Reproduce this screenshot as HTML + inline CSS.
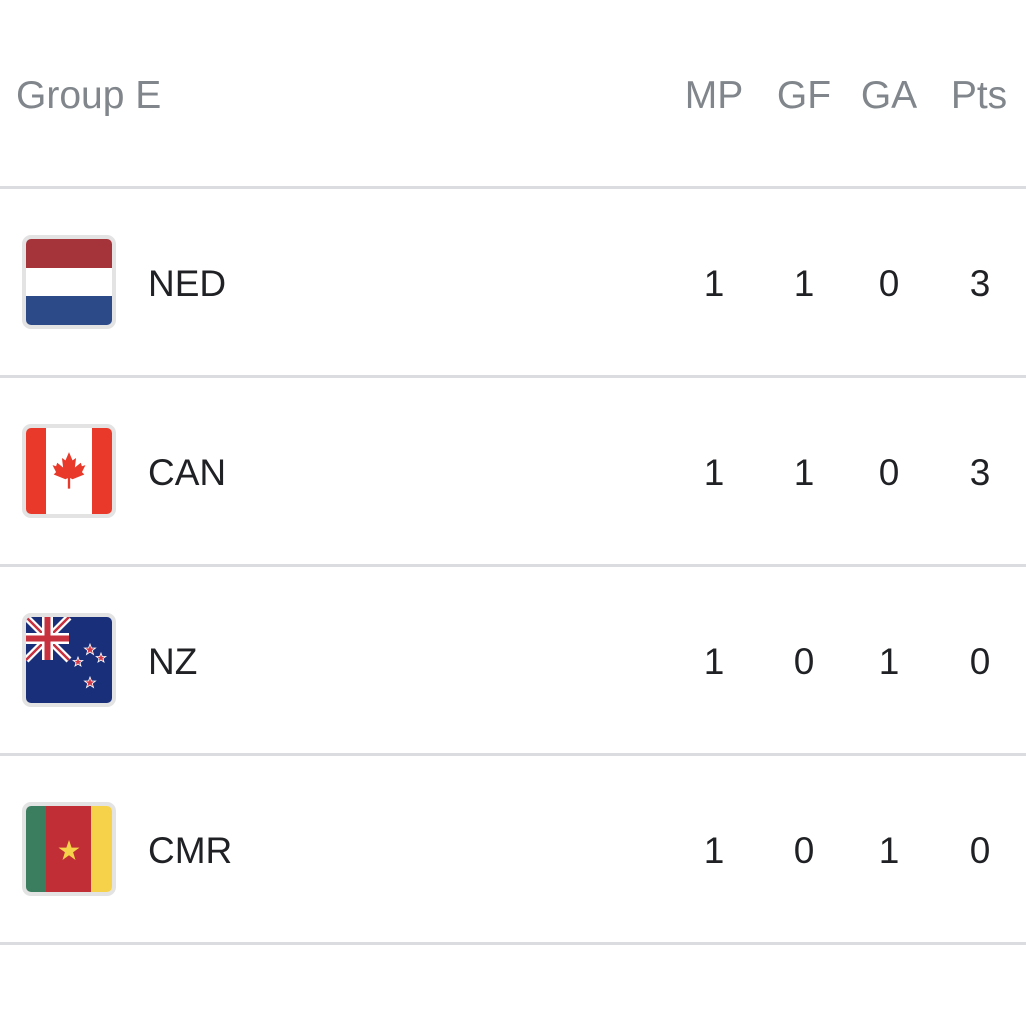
<!DOCTYPE html>
<html><head><meta charset="utf-8"><style>
html,body{margin:0;padding:0;background:#fff;width:1026px;height:1017px;overflow:hidden;font-family:"Liberation Sans",Arial,sans-serif}
.t{position:absolute;white-space:nowrap;font-size:37px;line-height:1}
.h{color:#80868b;top:76px;font-size:39px}
.c{transform:translateX(-50%)}
.n{color:#202124}
.line{position:absolute;left:0;width:1026px;height:3px;background:#dadce0}
.flag{position:absolute;left:22px;width:86px;height:86px;border:4px solid #e3e3e3;border-radius:9px;overflow:hidden}
.flag>div{position:absolute}
</style></head><body>
<div class="t h" style="left:16px">Group E</div>
<div class="t h c" style="left:714px">MP</div>
<div class="t h c" style="left:804px">GF</div>
<div class="t h c" style="left:889px">GA</div>
<div class="t h c" style="left:979px">Pts</div>

<div class="line" style="top:186px"></div>
<div class="line" style="top:375px"></div>
<div class="line" style="top:564px"></div>
<div class="line" style="top:753px"></div>
<div class="line" style="top:942px"></div>

<!-- NED -->
<div class="flag" style="top:235px">
<div style="left:0;top:0;width:86px;height:29px;background:#a4333a"></div>
<div style="left:0;top:29px;width:86px;height:28px;background:#fff"></div>
<div style="left:0;top:57px;width:86px;height:29px;background:#2c4a88"></div>
</div>
<!-- CAN -->
<div class="flag" style="top:424px">
<div style="left:0;top:0;width:20px;height:86px;background:#e8392a"></div>
<div style="left:20px;top:0;width:46px;height:86px;background:#fff"></div>
<div style="left:66px;top:0;width:20px;height:86px;background:#e8392a"></div>
<svg style="position:absolute;left:25px;top:23px" width="36" height="40" viewBox="0 0 30 34"><path d="M15 1 L18 8 L21 6 L20 14 L25 10 L26 13 L29 12 L26 18 L28 20 L18 24 L16 23 L16 32 L14 32 L14 23 L12 24 L2 20 L4 18 L1 12 L4 13 L5 10 L10 14 L9 6 L12 8 Z" fill="#e8392a"/></svg>
</div>
<!-- NZ -->
<div class="flag" style="top:613px;background:#1a2f7a">
<svg style="position:absolute;left:0;top:0" width="86" height="86" viewBox="0 0 86 86">
<path d="M0 0 L43 43 M43 0 L0 43" stroke="#fff" stroke-width="7"/>
<path d="M0 0 L43 43 M43 0 L0 43" stroke="#c8313e" stroke-width="2.5"/>
<rect x="16" y="0" width="11" height="43" fill="#fff"/><rect x="0" y="16" width="43" height="11" fill="#fff"/>
<rect x="18.5" y="0" width="6" height="43" fill="#c8313e"/><rect x="0" y="18.5" width="43" height="6" fill="#c8313e"/>
<g fill="#d23a48" stroke="#fff" stroke-width="0.8">
<polygon points="64,27 65.5,31 69.5,31 66.3,33.5 67.5,37.5 64,35 60.5,37.5 61.7,33.5 58.5,31 62.5,31"/>
<polygon points="75,36 76.3,39.5 79.8,39.5 77,41.6 78,45 75,43 72,45 73,41.6 70.2,39.5 73.7,39.5"/>
<polygon points="52,40 53.3,43.5 56.8,43.5 54,45.6 55,49 52,47 49,49 50,45.6 47.2,43.5 50.7,43.5"/>
<polygon points="64,60 65.5,64 69.5,64 66.3,66.5 67.5,70.5 64,68 60.5,70.5 61.7,66.5 58.5,64 62.5,64"/>
</g></svg>
</div>
<!-- CMR -->
<div class="flag" style="top:802px">
<div style="left:0;top:0;width:20px;height:86px;background:#3a7d5f"></div>
<div style="left:20px;top:0;width:45px;height:86px;background:#c12e36"></div>
<div style="left:65px;top:0;width:21px;height:86px;background:#f5d24a"></div>
<svg style="position:absolute;left:32px;top:34px" width="22" height="21" viewBox="0 0 22 21"><polygon points="11,0 13.6,7.6 21.5,7.6 15.1,12.3 17.5,20 11,15.3 4.5,20 6.9,12.3 0.5,7.6 8.4,7.6" fill="#f5d24a"/></svg>
</div>

<div class="t n" style="left:148px;top:265px">NED</div>
<div class="t n" style="left:148px;top:454px">CAN</div>
<div class="t n" style="left:148px;top:643px">NZ</div>
<div class="t n" style="left:148px;top:832px">CMR</div>

<div class="t n c" style="left:714px;top:265px">1</div><div class="t n c" style="left:804px;top:265px">1</div><div class="t n c" style="left:889px;top:265px">0</div><div class="t n c" style="left:980px;top:265px">3</div>
<div class="t n c" style="left:714px;top:454px">1</div><div class="t n c" style="left:804px;top:454px">1</div><div class="t n c" style="left:889px;top:454px">0</div><div class="t n c" style="left:980px;top:454px">3</div>
<div class="t n c" style="left:714px;top:643px">1</div><div class="t n c" style="left:804px;top:643px">0</div><div class="t n c" style="left:889px;top:643px">1</div><div class="t n c" style="left:980px;top:643px">0</div>
<div class="t n c" style="left:714px;top:832px">1</div><div class="t n c" style="left:804px;top:832px">0</div><div class="t n c" style="left:889px;top:832px">1</div><div class="t n c" style="left:980px;top:832px">0</div>
</body></html>
